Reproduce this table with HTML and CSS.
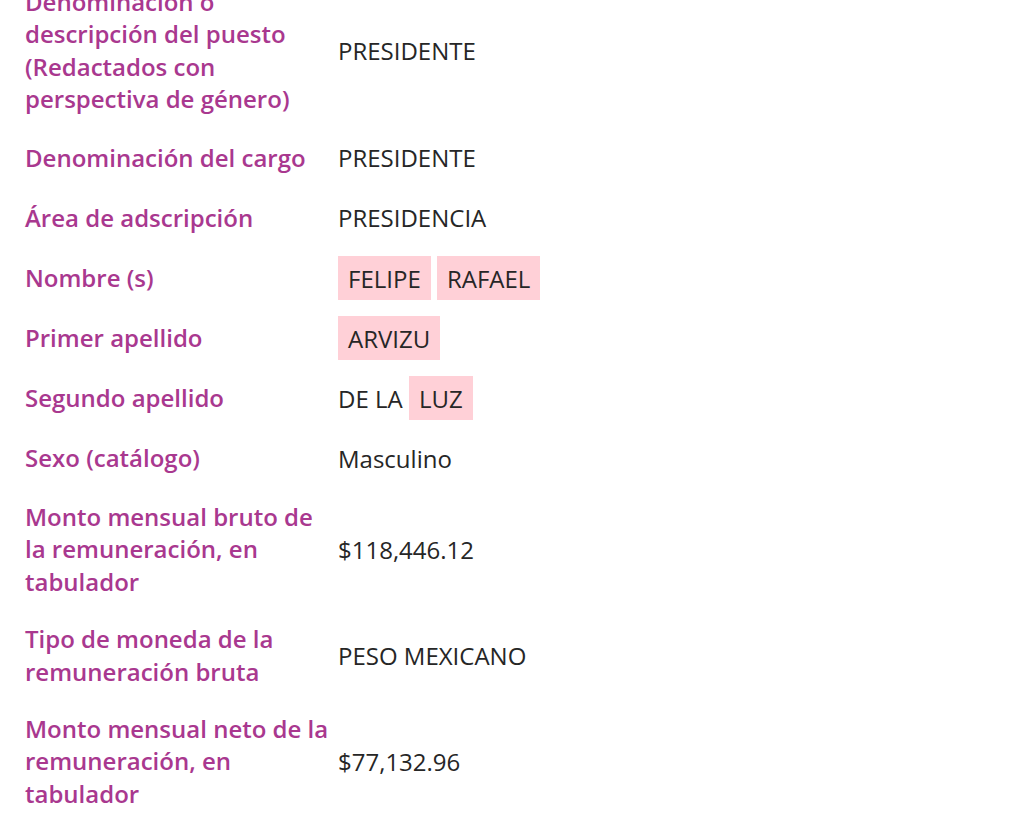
FILE: index.html
```html
<!DOCTYPE html>
<html lang="es">
<head>
<meta charset="utf-8">
<title>Detalle</title>
<link rel="stylesheet" href="styles.css">
</head>
<body>
<div class="sheet">
  <div class="row">
    <div class="label">Denominación o descripción del puesto (Redactados con perspectiva de género)</div>
    <div class="value">PRESIDENTE</div>
  </div>
  <div class="row">
    <div class="label">Denominación del cargo</div>
    <div class="value">PRESIDENTE</div>
  </div>
  <div class="row">
    <div class="label">Área de adscripción</div>
    <div class="value">PRESIDENCIA</div>
  </div>
  <div class="row">
    <div class="label">Nombre (s)</div>
    <div class="value"><span class="mark">FELIPE</span> <span class="mark">RAFAEL</span></div>
  </div>
  <div class="row">
    <div class="label">Primer apellido</div>
    <div class="value"><span class="mark">ARVIZU</span></div>
  </div>
  <div class="row">
    <div class="label">Segundo apellido</div>
    <div class="value">DE LA <span class="mark">LUZ</span></div>
  </div>
  <div class="row">
    <div class="label">Sexo (catálogo)</div>
    <div class="value">Masculino</div>
  </div>
  <div class="row">
    <div class="label">Monto mensual bruto de la remuneración, en tabulador</div>
    <div class="value">$118,446.12</div>
  </div>
  <div class="row">
    <div class="label">Tipo de moneda de la remuneración bruta</div>
    <div class="value">PESO MEXICANO</div>
  </div>
  <div class="row">
    <div class="label">Monto mensual neto de la remuneración, en tabulador</div>
    <div class="value">$77,132.96</div>
  </div>
</div>
</body>
</html>
```
FILE: styles.css
```css
html, body {
  margin: 0;
  padding: 0;
  background: #ffffff;
}
body {
  font-family: "Open Sans", "Noto Sans", sans-serif;
  font-size: 24px;
  overflow: hidden;
}
.sheet {
  margin-top: -26.5px;
  display: flex;
  flex-direction: column;
}
.row {
  display: grid;
  grid-template-columns: 338px 1fr;
  align-items: center;
  padding: 12.3px 0;
}
.label {
  padding: 0 5px 0 25px;
  color: #a9388f;
  font-weight: 600;
  line-height: 32.5px;
}
.value {
  color: #262626;
  font-weight: 400;
  line-height: 35.5px;
}
.mark {
  background: #ffd0d7;
  padding: 5.7px 10px;
}
```
